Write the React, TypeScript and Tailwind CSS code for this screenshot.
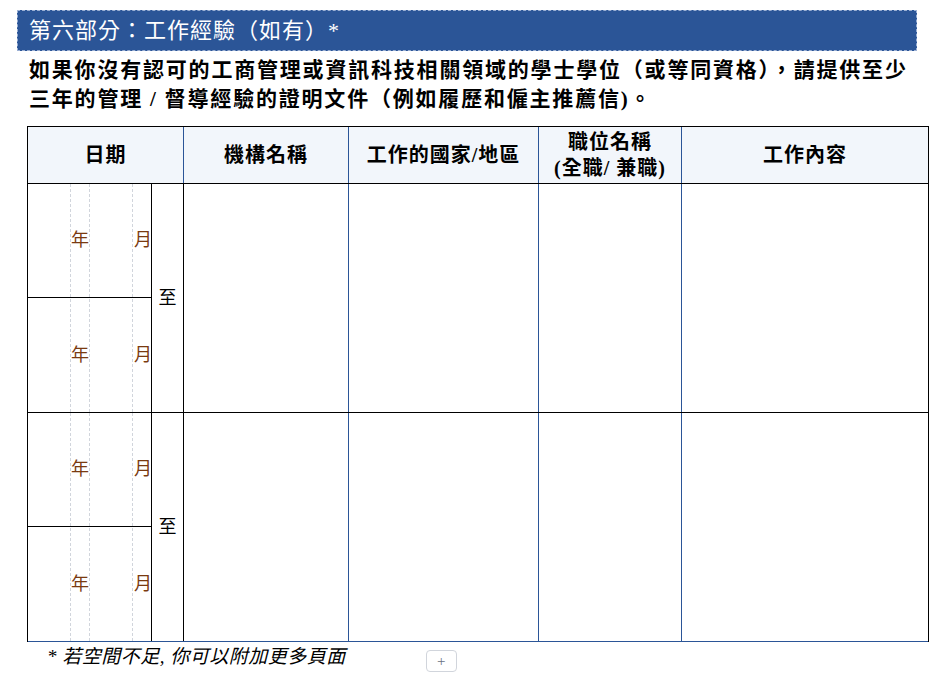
const font = { fontFamily: '"Liberation Serif", "Noto Sans CJK TC", serif' };

const DateHalf = ({ last }: { last?: boolean }) => (
  <div className={`relative flex h-[114px] items-center ${last ? '' : 'border-b border-black'}`}>
    <span className="absolute left-[43px] text-[18px] text-[#7a3a10]">年</span>
    <span className="absolute left-[106px] text-[18px] text-[#7a3a10]">月</span>
  </div>
);

const Row = ({ bottomBlue }: { bottomBlue?: boolean }) => (
  <div className={`flex h-[229px] ${bottomBlue ? 'border-b border-[#2b5597]' : 'border-b border-black'}`}>
    <div className="relative flex w-[156px] border-r border-black">
      <div className="pointer-events-none absolute inset-y-0 left-[42px] border-l border-dashed border-gray-300" />
      <div className="pointer-events-none absolute inset-y-0 left-[61px] border-l border-dashed border-gray-300" />
      <div className="pointer-events-none absolute inset-y-0 left-[104px] border-l border-dashed border-gray-300" />
      <div className="w-[124px] border-r border-black">
        <DateHalf />
        <DateHalf last />
      </div>
      <div className="flex flex-1 items-center justify-center text-[18px]">至</div>
    </div>
    <div className="w-[165px] border-r border-[#2b5597]" />
    <div className="w-[190px] border-r border-[#2b5597]" />
    <div className="w-[143px] border-r border-[#2b5597]" />
    <div className="flex-1" />
  </div>
);

export default function App() {
  return (
    <div className="h-[686px] w-[939px] overflow-hidden bg-white pt-[10px] text-black" style={font}>
      <div className="ml-[17px] flex h-[41px] w-[900px] items-center border border-dashed border-[#9bb0d4] bg-[#2b5597] px-[11px] text-[22px] tracking-[1px] text-white">
        第六部分：工作經驗（如有）*
      </div>
      <div className="ml-[29px] mt-[5px] w-[890px] text-[21px] font-bold leading-[29px] tracking-[1.8px]">
        如果你沒有認可的工商管理或資訊科技相關領域的學士學位（或等同資格），請提供至少三年的管理 / 督導經驗的證明文件（例如履歷和僱主推薦信)。
      </div>
      <div className="ml-[27px] mt-[12px] w-[902px] border-x border-t border-black">
        <div className="flex h-[57px] border-b border-black bg-[#f2f6fb] text-[20px] font-bold tracking-[1px]">
          <div className="flex w-[156px] items-center justify-center border-r border-[#2b5597]">日期</div>
          <div className="flex w-[165px] items-center justify-center border-r border-[#2b5597]">機構名稱</div>
          <div className="flex w-[190px] items-center justify-center border-r border-[#2b5597]">工作的國家/地區</div>
          <div className="flex w-[143px] flex-col items-center justify-center border-r border-[#2b5597] leading-[26px]">
            <span>職位名稱</span>
            <span>(全職/ 兼職)</span>
          </div>
          <div className="flex flex-1 items-center justify-center">工作內容</div>
        </div>
        <Row />
        <Row bottomBlue />
      </div>
      <div className="flex items-start">
        <div className="ml-[47px] mt-[1px] text-[19px] italic tracking-[0.5px]">* 若空間不足, 你可以附加更多頁面</div>
        <div className="ml-[80px] mt-[8px] flex h-[22px] w-[31px] items-center justify-center rounded border border-gray-300 text-[15px] text-gray-500">+</div>
      </div>
    </div>
  );
}
